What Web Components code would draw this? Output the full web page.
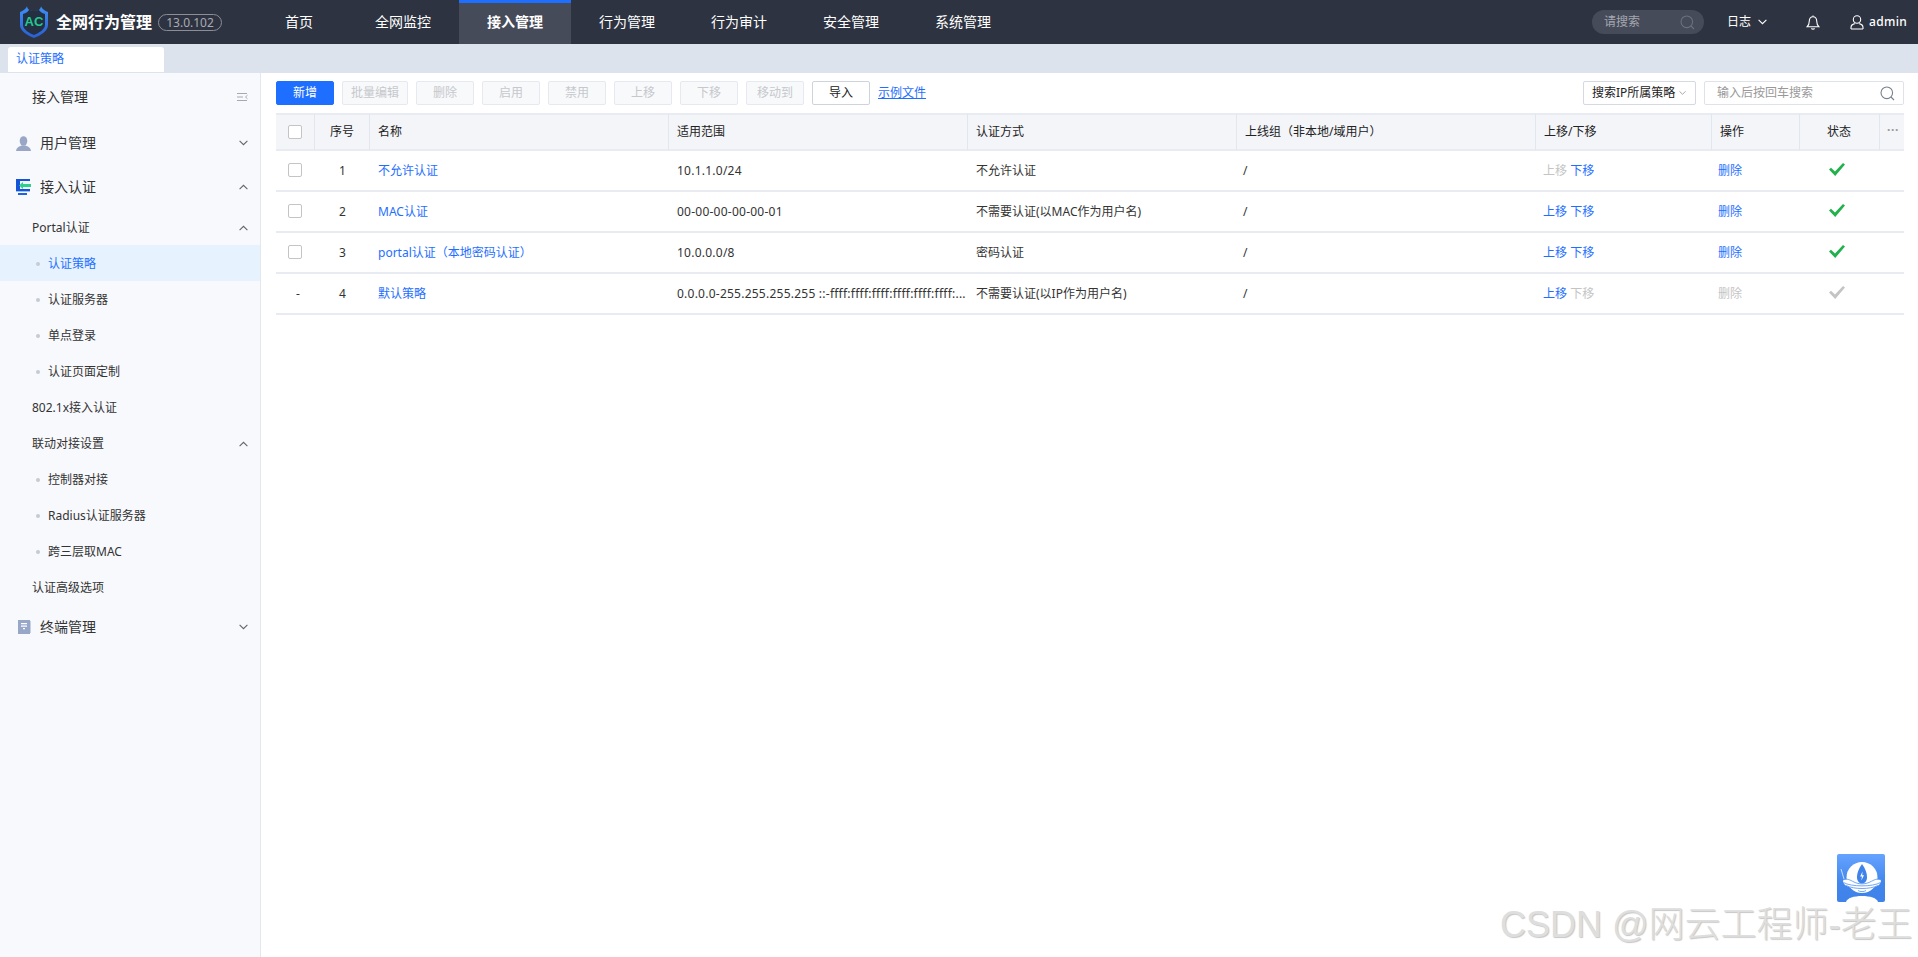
<!DOCTYPE html>
<html lang="zh-CN">
<head>
<meta charset="utf-8">
<title>全网行为管理</title>
<style>
  html, body { margin: 0; height: 100%; overflow: hidden; background: #fff; }
  body { font: 12px/16px "Noto Sans", "Noto Sans CJK SC", sans-serif; color: #333; }
</style>
</head>
<body>
<ac-app></ac-app>
<script>
const CHEVRON_DOWN = '<svg width="9" height="6" viewBox="0 0 9 6" fill="none" stroke="currentColor" stroke-width="1.1"><path d="M.6.8l3.9 3.9L8.4.8"/></svg>';
const CHEVRON_UP = '<svg width="9" height="6" viewBox="0 0 9 6" fill="none" stroke="currentColor" stroke-width="1.1"><path d="M.6 5.2l3.9-3.9 3.9 3.9"/></svg>';
const SEARCH = '<svg width="15" height="15" viewBox="0 0 15 15" fill="none" stroke="currentColor" stroke-width="1.1"><circle cx="6.8" cy="6.8" r="5.8"/><path d="M11 11l3 3"/></svg>';

// Top dark bar
class AcTopbar extends HTMLElement {
  connectedCallback() {
    const items = ['首页', '全网监控', '接入管理', '行为管理', '行为审计', '安全管理', '系统管理'];
    this.attachShadow({ mode: 'open' }).innerHTML = `
      <style>
        :host { display: flex; height: 44px; background: #2e3341; color: #fff; align-items: stretch; }
        .logo { display: flex; align-items: center; width: 251px; padding-left: 20px; box-sizing: border-box; flex: none; }
        .logo svg { flex: none; }
        .title { font-size: 16px; font-weight: 700; margin-left: 8px; line-height: 22px; white-space: nowrap; }
        .ver { margin-left: 6px; height: 15px; width: 62px; border: 1px solid #8b8e97; border-radius: 9px; color: #a9abb2; font-size: 12px; line-height: 15px; text-align: center; }
        nav { display: flex; flex: 1; }
        a { width: 112px; display: flex; align-items: center; justify-content: center; font-size: 14px; box-sizing: border-box; border-top: 3px solid transparent; padding-bottom: 3px; }
        a:first-child { width: 96px; }
        a.on { background: #464b59; border-top-color: #1e6fff; font-weight: 700; }
        .right { display: flex; align-items: center; padding-right: 11px; }
        .search { width: 112px; height: 24px; border-radius: 12px; background: #464b59; display: flex; align-items: center; justify-content: space-between; box-sizing: border-box; padding: 0 9px 0 12px; color: #a4a7b0; }
        .search svg { color: #6d717d; }
        .log { margin-left: 23px; display: flex; align-items: center; gap: 7px; }
        .bell { margin-left: 39px; display: flex; }
        .user { margin-left: 30px; display: flex; align-items: center; gap: 5px; font-weight: 500; letter-spacing: .3px; }
      </style>
      <div class="logo">
        <svg width="28" height="32" viewBox="0 0 28 32">
          <defs><linearGradient id="sh" x1="0" y1="0" x2="0" y2="1"><stop offset="0" stop-color="#3d8ff5"/><stop offset="1" stop-color="#2a5fd2"/></linearGradient></defs>
          <path fill="url(#sh)" d="M7 0C6.500 2.500 3 5 0 6V19C0 25 8 30 14 32C20 30 28 25 28 19V6C25 5 21.500 2.500 21 0C21 3 18 5 14 5C10 5 7 3 7 0Z"/>
          <path fill="#242f42" d="M3 8C6 7.500 8.500 5 9.500 3.500C11 4.600 12.500 5 14 5C15.500 5 17 4.600 18.500 3.500C19.500 5 22 7.500 25 8V19C25 23.500 18 27.500 14 29C10 27.500 3 23.500 3 19Z"/>
          <text x="14" y="20" text-anchor="middle" font-size="13" font-weight="700" fill="#22c88e" font-family="Liberation Sans, sans-serif">AC</text>
        </svg>
        <span class="title">全网行为管理</span>
        <span class="ver">13.0.102</span>
      </div>
      <nav>${items.map(t => `<a class="${t === '接入管理' ? 'on' : ''}">${t}</a>`).join('')}</nav>
      <div class="right">
        <div class="search"><span>请搜索</span>${SEARCH}</div>
        <div class="log"><span>日志</span>${CHEVRON_DOWN}</div>
        <div class="bell"><svg width="14" height="15" viewBox="0 0 14 15" fill="none" stroke="#fff" stroke-width="1.1"><path d="M7 1.800C4.500 1.800 3.300 3.600 3.300 6C3.300 8.800 2.600 10.400 1 11.800H13C11.400 10.400 10.700 8.800 10.700 6C10.700 3.600 9.500 1.800 7 1.800ZM7 .4V1.800M5.500 13.200C6 14.400 8 14.400 8.500 13.200"/></svg></div>
        <div class="user"><svg width="14" height="15" viewBox="0 0 14 15" fill="none" stroke="#fff" stroke-width="1.1"><circle cx="7" cy="4.500" r="3.700"/><path d="M1 14V12.500C1 10.500 3 9 4.800 8.600M13 14V12.500C13 10.500 11 9 9.200 8.600M1 14H13"/></svg><span>admin</span></div>
      </div>`;
  }
}

// Strip with the open page tabs
class AcTabbar extends HTMLElement {
  connectedCallback() {
    this.attachShadow({ mode: 'open' }).innerHTML = `
      <style>
        :host { display: flex; height: 29px; background: #dde3ed; box-sizing: border-box; padding: 3px 0 1px 8px; }
        div { width: 156px; box-sizing: border-box; background: #fff; color: #1e6fff; border-radius: 3px 3px 0 0; padding-left: 8px; line-height: 23px; }
      </style>
      <div><slot></slot></div>`;
  }
}

// One row of the side menu
class AcMenuItem extends HTMLElement {
  connectedCallback() {
    const level = this.getAttribute('level') || 'top';
    const arrow = this.getAttribute('arrow');
    const icon = this.getAttribute('icon');
    const icons = {
      user: '<svg width="15" height="15" viewBox="0 0 15 15" fill="#9aa6c6"><ellipse cx="7.500" cy="5" rx="3.800" ry="4.800"/><path d="M0 15C.5 11.500 3 10.500 5.500 9.500H9.500C12 10.500 14.500 11.500 15 15Z"/></svg>',
      access: '<svg width="15" height="16" viewBox="0 0 15 16"><path fill="#1553d8" d="M0 0H14V12H0Z"/><path fill="#f2f6ff" d="M4 2H14V10H4Z"/><path fill="#9fc0f5" d="M0 12H14V13H0Z"/><path fill="#1d62e8" d="M2 14H11V16H2Z"/><path fill="#2fd08e" d="M3 6.500L7 3V5H15V8H7V10Z"/></svg>',
      term: '<svg width="13" height="14" viewBox="0 0 13 14" style="margin-left:2px"><path fill="#98a6c8" d="M0 0H12V14H0Z"/><path fill="#c8d0e2" d="M12 1H13V13H12Z"/><path fill="#fff" d="M3 3H9V4.200H3ZM3 5.500H9V6.700H3ZM5 8H7V9.200H5Z"/></svg>'
    };
    this.attachShadow({ mode: 'open' }).innerHTML = `
      <style>
        :host { display: flex; align-items: center; color: #333; font-size: 12px; height: 36px; padding: 2px 12px 0 32px; box-sizing: border-box; }
        :host([level="top"]) { height: 44px; font-size: 14px; padding: 0 12px 0 16px; }
        :host([level="leaf"]) { padding-left: 36px; }
        :host([active]) { background: #e6f3ff; color: #1e6fff; }
        .ico { width: 24px; flex: none; display: flex; }
        .dot { width: 4px; height: 4px; border-radius: 50%; background: #c6cbd4; margin-right: 8px; flex: none; }
        .label { flex: 1; white-space: nowrap; }
        .arrow { color: #666; display: flex; }
      </style>
      ${level === 'leaf' ? '<span class="dot"></span>' : ''}
      ${icon ? `<span class="ico">${icons[icon]}</span>` : ''}
      <span class="label"><slot></slot></span>
      ${arrow ? `<span class="arrow">${arrow === 'up' ? CHEVRON_UP : CHEVRON_DOWN}</span>` : ''}`;
  }
}

class AcSidebar extends HTMLElement {
  connectedCallback() {
    this.attachShadow({ mode: 'open' }).innerHTML = `
      <style>
        :host { display: block; width: 261px; flex: none; box-sizing: border-box; background: #f8f9fd; border-right: 1px solid #e3e7ef; }
        .head { height: 48px; display: flex; align-items: center; justify-content: space-between; padding: 0 12px 0 32px; font-size: 14px; color: #333; }
      </style>
      <div class="head"><span>接入管理</span>
        <svg width="11" height="10" viewBox="0 0 11 10" fill="none" stroke="#a5a9b3"><path d="M0 1.500H10M0 5H6M0 8.500H10M10.500 3.200L8.500 5L10.500 6.800"/></svg>
      </div>
      <slot></slot>`;
  }
}

// Toolbar button
class AcButton extends HTMLElement {
  connectedCallback() {
    this.attachShadow({ mode: 'open' }).innerHTML = `
      <style>
        :host { display: flex; align-items: center; justify-content: center; width: 58px; height: 24px; box-sizing: border-box; border: 1px solid #e6e9ef; border-radius: 2px; background: #f8f9fb; color: #c6c8cc; flex: none; }
        :host([wide]) { width: 66px; }
        :host([primary]) { background: #1e6fff; border-color: #1e6fff; color: #fff; }
        :host([plain]) { background: #fff; border-color: #cfd3db; color: #222; }
      </style>
      <slot></slot>`;
  }
}

class AcToolbar extends HTMLElement {
  connectedCallback() {
    this.attachShadow({ mode: 'open' }).innerHTML = `
      <style>
        :host { display: flex; gap: 8px; align-items: center; height: 24px; }
        a { color: #1e6fff; text-decoration: underline; }
        .sp { flex: 1; }
        .sel { width: 113px; height: 24px; box-sizing: border-box; border: 1px solid #d5d9e1; border-radius: 2px; display: flex; align-items: center; justify-content: space-between; padding: 0 9px 0 8px; color: #222; white-space: nowrap; }
        .sel svg { color: #999; width: 7px; }
        .inp { width: 200px; height: 24px; box-sizing: border-box; border: 1px solid #dfe2e8; border-radius: 2px; display: flex; align-items: center; justify-content: space-between; padding: 0 8px 0 12px; color: #999; }
        .inp svg { color: #77808c; }
      </style>
      <ac-button primary>新增</ac-button>
      <ac-button wide>批量编辑</ac-button>
      <ac-button>删除</ac-button>
      <ac-button>启用</ac-button>
      <ac-button>禁用</ac-button>
      <ac-button>上移</ac-button>
      <ac-button>下移</ac-button>
      <ac-button>移动到</ac-button>
      <ac-button plain>导入</ac-button>
      <a>示例文件</a>
      <span class="sp"></span>
      <div class="sel"><span>搜索IP所属策略</span>${CHEVRON_DOWN}</div>
      <div class="inp"><span>输入后按回车搜索</span>${SEARCH}</div>`;
  }
}

// Policy table
class AcPolicyTable extends HTMLElement {
  constructor() {
    super();
    this.attachShadow({ mode: 'open' });
    this._data = [
      { sel: true, n: 1, nombre: '不允许认证', rango: '10.1.1.0/24', modo: '不允许认证', up: 0, down: 1, del: 1, on: 1 },
      { sel: true, n: 2, nombre: 'MAC认证', rango: '00-00-00-00-00-01', modo: '不需要认证(以MAC作为用户名)', up: 1, down: 1, del: 1, on: 1 },
      { sel: true, n: 3, nombre: 'portal认证（本地密码认证）', rango: '10.0.0.0/8', modo: '密码认证', up: 1, down: 1, del: 1, on: 1 },
      { sel: false, n: 4, nombre: '默认策略', rango: '0.0.0.0-255.255.255.255 ::-ffff:ffff:ffff:ffff:ffff:ffff:...', modo: '不需要认证(以IP作为用户名)', up: 1, down: 0, del: 0, on: 0 }
    ];
  }

  connectedCallback() {
    const check = c => `<svg width="16" height="13" viewBox="0 0 16 13"><path fill="${c}" d="M0 6.500L2 4.800L6 8.600L14 0L16 1.500L6.200 13Z"/></svg>`;
    const fila = r => `<tr>
      <td class="c">${r.sel ? '<i class="box"></i>' : '<span class="dash">-</span>'}</td>
      <td class="c">${r.n}</td>
      <td class="lnk">${r.nombre}</td>
      <td class="num">${r.rango}</td>
      <td>${r.modo}</td>
      <td class="sl">/</td>
      <td class="mv"><span class="${r.up ? 'lnk' : 'off'}">上移</span> <span class="${r.down ? 'lnk' : 'off'}">下移</span></td>
      <td class="op"><span class="${r.del ? 'lnk' : 'off'}">删除</span></td>
      <td class="st">${check(r.on ? '#22b14c' : '#c4c4c4')}</td>
      <td></td></tr>`;
    this.shadowRoot.innerHTML = `
      <style>
        :host { display: block; margin-top: 8px; }
        table { border-collapse: separate; border-spacing: 0; table-layout: fixed; width: 1628px; }
        th { height: 38px; padding: 0 8px; box-sizing: border-box; background: #f3f5f9; border-top: 2px solid #e8ebf2; border-bottom: 2px solid #e8ebf2; border-right: 1px solid #e2e6ee; font-weight: 400; color: #222; text-align: left; white-space: nowrap; }
        th:last-child { border-right: 0; color: #999; padding: 0 0 4px 7px; letter-spacing: .6px; font-weight: 700; }
        td { height: 41px; padding: 0 8px; box-sizing: border-box; border-bottom: 2px solid #e8ebf2; white-space: nowrap; overflow: hidden; }
        .c { text-align: center; }
        th.c { padding: 0; }
        td.c { padding: 0; }
        .box { display: block; width: 14px; height: 14px; box-sizing: border-box; border: 1px solid #c4c4c4; border-radius: 2px; background: #fff; margin: 0 0 2px 12px; }
        th .box { margin: 0 0 0 12px; }
        .dash { display: block; padding: 0 0 0 5px; }
        .lnk { color: #1e6fff; }
        .off { color: #c4c4c4; }
        td.sl { padding-left: 6px; }
        td.mv { padding-left: 7px; }
        td.op { padding-left: 6px; }
        td.st { padding: 0 0 0 29px; }
        td.st svg { display: block; margin-top: -3px; }
        th.st { padding: 0 0 0 27px; }
        .num { letter-spacing: .02em; }
      </style>
      <table>
        <colgroup><col style="width:39px"><col style="width:55px"><col style="width:299px"><col style="width:299px"><col style="width:269px"><col style="width:299px"><col style="width:176px"><col style="width:88px"><col style="width:80px"><col style="width:24px"></colgroup>
        <thead><tr>
          <th class="c"><i class="box"></i></th><th class="c">序号</th><th>名称</th><th>适用范围</th><th>认证方式</th>
          <th>上线组（非本地/域用户）</th><th>上移/下移</th><th>操作</th><th class="st">状态</th><th>···</th>
        </tr></thead>
        <tbody>${this._data.map(fila).join('')}</tbody>
      </table>`;
  }
}

// Robot assistant button, fixed over the page corner
class AcAssistant extends HTMLElement {
  connectedCallback() {
    this.attachShadow({ mode: 'open' }).innerHTML = `
      <style>
        :host { position: absolute; left: 1837px; top: 854px; width: 48px; height: 48px; display: block; }
      </style>
      <svg width="48" height="48" viewBox="0 0 48 48">
        <defs><linearGradient id="rb" x1="0" y1="0" x2="0" y2="1"><stop offset="0" stop-color="#66a3ff"/><stop offset=".6" stop-color="#4186ec"/><stop offset="1" stop-color="#3f82ea"/></linearGradient></defs>
        <rect width="48" height="48" rx="2" fill="url(#rb)"/>
        <circle cx="25" cy="23.500" r="15.500" fill="#fff"/>
        <path d="M25 10C21.500 15 20 19 20 23C20 27 22 29.500 25 29.500C28 29.500 30 27 30 23C30 19 28.500 15 25 10Z" fill="#3f82ea"/>
        <path d="M25.500 17.500L23.200 22.500H25L24.300 26.500L27 21.300H25.200Z" fill="#fff"/>
        <path d="M6 26C10 24 13 26 17 28C22 30.500 28 30.500 33 28C37 26 40 24 44 26C44 30 41 32 38 33C30 36.500 20 36.500 12 33C9 32 6 30 6 26Z" fill="#fff"/>
        <path d="M6 26C10 24 13 26 17 28C22 30.500 28 30.500 33 28C37 26 40 24 44 26M6.500 28.500C14 33 36 33 43.500 28.500M9 31.500C17 35.500 33 35.500 41 31.500" fill="none" stroke="#4f90f0" stroke-width=".8"/>
        <path d="M21 36.500C23 38 27 38 29 36.500" fill="none" stroke="#4f90f0" stroke-width=".8"/>
        <path d="M9 48C10 44 17 42 25 42C33 42 40 44 41 48Z" fill="#fff"/>
        <path d="M4 15L7 25" stroke="#fff" stroke-width=".7"/>
      </svg>`;
  }
}

// Grey watermark stamped on the screenshot
class AcWatermark extends HTMLElement {
  connectedCallback() {
    this.attachShadow({ mode: 'open' }).innerHTML = `
      <style>
        :host { position: absolute; left: 1500px; top: 903px; display: block; white-space: nowrap; pointer-events: none;
          font: 36px/44px "Liberation Sans", "Noto Sans CJK SC", sans-serif; font-weight: 300; color: #dedede; text-shadow: 1px 1px 1px #c6c6c6; }
      </style>
      <slot></slot>`;
  }
}

class AcApp extends HTMLElement {
  connectedCallback() {
    this.attachShadow({ mode: 'open' }).innerHTML = `
      <style>
        :host { display: flex; flex-direction: column; height: 957px; width: 1918px; position: relative; overflow: hidden; }
        .body { display: flex; flex: 1; min-height: 0; }
        main { flex: 1; padding: 8px 14px 0 15px; min-width: 0; }
      </style>
      <ac-topbar></ac-topbar>
      <ac-tabbar>认证策略</ac-tabbar>
      <div class="body">
        <ac-sidebar>
          <ac-menu-item level="top" icon="user" arrow="down">用户管理</ac-menu-item>
          <ac-menu-item level="top" icon="access" arrow="up">接入认证</ac-menu-item>
          <ac-menu-item level="sub" arrow="up">Portal认证</ac-menu-item>
          <ac-menu-item level="leaf" active>认证策略</ac-menu-item>
          <ac-menu-item level="leaf">认证服务器</ac-menu-item>
          <ac-menu-item level="leaf">单点登录</ac-menu-item>
          <ac-menu-item level="leaf">认证页面定制</ac-menu-item>
          <ac-menu-item level="sub">802.1x接入认证</ac-menu-item>
          <ac-menu-item level="sub" arrow="up">联动对接设置</ac-menu-item>
          <ac-menu-item level="leaf">控制器对接</ac-menu-item>
          <ac-menu-item level="leaf">Radius认证服务器</ac-menu-item>
          <ac-menu-item level="leaf">跨三层取MAC</ac-menu-item>
          <ac-menu-item level="sub">认证高级选项</ac-menu-item>
          <ac-menu-item level="top" icon="term" arrow="down">终端管理</ac-menu-item>
        </ac-sidebar>
        <main>
          <ac-toolbar></ac-toolbar>
          <ac-policy-table></ac-policy-table>
        </main>
      </div>
      <ac-assistant></ac-assistant>
      <ac-watermark>CSDN @网云工程师-老王</ac-watermark>`;
  }
}

customElements.define('ac-topbar', AcTopbar);
customElements.define('ac-tabbar', AcTabbar);
customElements.define('ac-menu-item', AcMenuItem);
customElements.define('ac-sidebar', AcSidebar);
customElements.define('ac-button', AcButton);
customElements.define('ac-toolbar', AcToolbar);
customElements.define('ac-policy-table', AcPolicyTable);
customElements.define('ac-assistant', AcAssistant);
customElements.define('ac-watermark', AcWatermark);
customElements.define('ac-app', AcApp);
</script>
</body>
</html>
